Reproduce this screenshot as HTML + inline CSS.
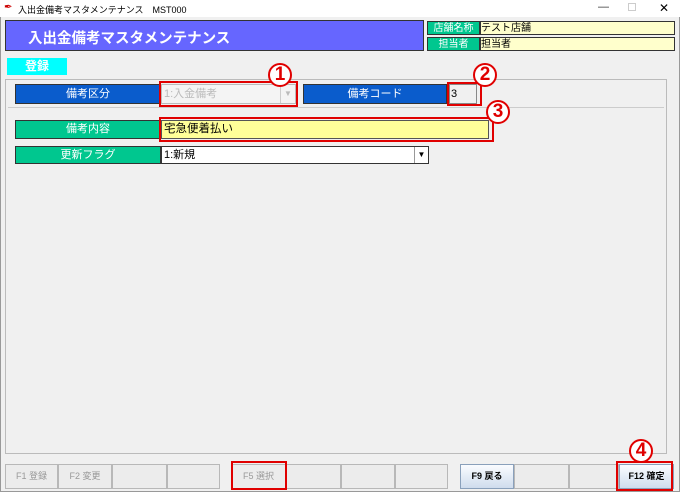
<!DOCTYPE html>
<html><head><meta charset="utf-8"><style>
*{margin:0;padding:0;box-sizing:border-box}
body{width:680px;height:492px;background:#f0f0f0;font-family:"Liberation Sans","Noto Sans CJK JP",sans-serif;font-size:11px;position:relative;overflow:hidden}
.a{position:absolute}
.lbl{color:#fff;text-align:center;border:1px solid #333}
.blue{background:#0a5ccc}
.green{background:#00c78f}
.red{border:2px solid #e00000}
.circ{width:24px;height:24px;border-radius:50%;border:2px solid #e00000;background:#fff;color:#e00000;font-weight:bold;font-size:19px;line-height:20px;text-align:center}
.btn{top:464px;height:25px;border:1px solid #b8b8b8;background:#ececec;color:#999;font-size:9px;text-align:center;line-height:23px}
.btn.on{background:linear-gradient(#fafcff,#cfdced);border-color:#8aa0bb;color:#000;font-weight:bold}
</style></head><body>
<div class="a" style="left:0;top:0;width:680px;height:17px;background:#fff"></div>
<div class="a" style="left:4px;top:2px;color:#c00;font-size:10px">&#x2712;</div>
<div class="a" style="left:18px;top:3px;font-size:9px">入出金備考マスタメンテナンス　MST000</div>
<div class="a" style="left:598px;top:1px;color:#333;font-size:11px">—</div>
<div class="a" style="left:628px;top:3px;width:8px;height:8px;border:1px solid #ccc"></div>
<div class="a" style="left:659px;top:1px;font-size:12px">✕</div>
<div class="a" style="left:0;top:17px;width:680px;height:475px;border:1px solid #999;border-top:none"></div>
<div class="a" style="left:5px;top:20px;width:419px;height:31px;background:#6666ff;border:1px solid #333;color:#fff;font-size:14.5px;font-weight:bold;padding:6px 0 0 22px">入出金備考マスタメンテナンス</div>
<div class="a lbl green" style="left:427px;top:21px;width:53px;height:14px;font-size:10px;line-height:13px">店舗名称</div>
<div class="a" style="left:480px;top:21px;width:195px;height:14px;background:#ffffcc;border:1px solid #333;font-size:10px;line-height:13px">テスト店舗</div>
<div class="a lbl green" style="left:427px;top:37px;width:53px;height:14px;font-size:10px;line-height:13px">担当者</div>
<div class="a" style="left:480px;top:37px;width:195px;height:14px;background:#ffffcc;border:1px solid #333;font-size:10px;line-height:13px">担当者</div>
<div class="a" style="left:7px;top:58px;width:60px;height:17px;background:#00ffff;color:#fff;font-size:12px;text-align:center;line-height:17px;font-weight:bold">登録</div>
<div class="a" style="left:5px;top:79px;width:662px;height:375px;border:1px solid #bbb"></div>
<div class="a" style="left:8px;top:107px;width:656px;height:1px;background:#ccc"></div>
<div class="a lbl blue" style="left:15px;top:84px;width:146px;height:20px;line-height:18px">備考区分</div>
<div class="a" style="left:161px;top:84px;width:135px;height:20px;background:#f4f4f4;border:1px solid #bbb;color:#bbb;line-height:18px;padding-left:2px">1:入金備考</div>
<div class="a" style="left:280px;top:85px;width:15px;height:18px;border-left:1px solid #ccc;color:#bbb;font-size:8px;text-align:center;line-height:18px">▼</div>
<div class="a red" style="left:159px;top:81px;width:139px;height:26px"></div>
<div class="a circ" style="left:268px;top:63px">1</div>
<div class="a lbl blue" style="left:303px;top:84px;width:144px;height:20px;line-height:18px">備考コード</div>
<div class="a" style="left:449px;top:84px;width:28px;height:20px;background:#f0f0f0;border:1px solid #888;line-height:18px;padding-left:1px">3</div>
<div class="a red" style="left:447px;top:82px;width:35px;height:24px"></div>
<div class="a circ" style="left:473px;top:63px">2</div>
<div class="a lbl green" style="left:15px;top:120px;width:146px;height:19px;line-height:17px">備考内容</div>
<div class="a" style="left:161px;top:120px;width:328px;height:19px;background:#ffff99;border:1px solid #555;line-height:17px;padding-left:2px;font-size:11.5px">宅急便着払い</div>
<div class="a red" style="left:159px;top:117px;width:335px;height:25px"></div>
<div class="a circ" style="left:486px;top:100px">3</div>
<div class="a lbl green" style="left:15px;top:146px;width:146px;height:18px;line-height:16px">更新フラグ</div>
<div class="a" style="left:161px;top:146px;width:268px;height:18px;background:#fff;border:1px solid #333;line-height:16px;padding-left:2px">1:新規</div>
<div class="a" style="left:414px;top:147px;width:14px;height:16px;border-left:1px solid #999;font-size:8px;text-align:center;line-height:16px">▼</div>
<div class="a btn" style="left:5px;width:53px">F1 登録</div>
<div class="a btn" style="left:58px;width:54px">F2 変更</div>
<div class="a btn" style="left:112px;width:55px"></div>
<div class="a btn" style="left:167px;width:53px"></div>
<div class="a btn" style="left:231px;width:55px">F5 選択</div>
<div class="a btn" style="left:286px;width:55px"></div>
<div class="a btn" style="left:341px;width:54px"></div>
<div class="a btn" style="left:395px;width:53px"></div>
<div class="a btn on" style="left:460px;width:54px">F9 戻る</div>
<div class="a btn" style="left:514px;width:55px"></div>
<div class="a btn" style="left:569px;width:50px"></div>
<div class="a btn on" style="left:619px;width:55px">F12 確定</div>
<div class="a red" style="left:231px;top:461px;width:56px;height:29px"></div>
<div class="a red" style="left:616px;top:461px;width:57px;height:30px"></div>
<div class="a circ" style="left:629px;top:439px">4</div>
</body></html>
